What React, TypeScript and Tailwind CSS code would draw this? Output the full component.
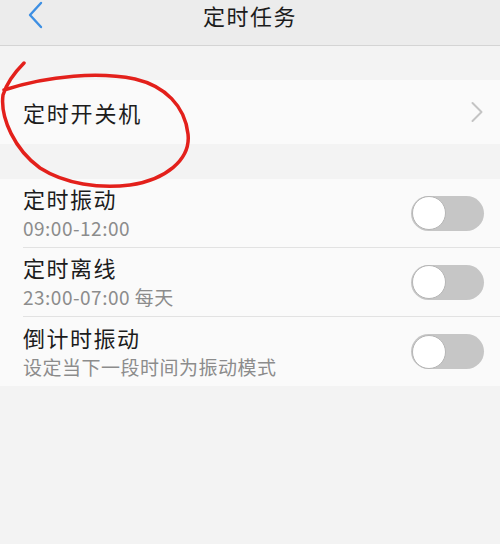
const font = { fontFamily: '"Noto Sans CJK SC", "Noto Sans", sans-serif' };

const toggles = [
  { id: 1, title: "定时振动", sub: "09:00-12:00" },
  { id: 2, title: "定时离线", sub: "23:00-07:00 每天" },
  { id: 3, title: "倒计时振动", sub: "设定当下一段时间为振动模式" },
];

const Switch = () => (
  <div className="w-[73px] h-[35px] rounded-full bg-[#c6c6c6] p-[1px] flex items-center shrink-0">
    <div className="w-[34px] h-[34px] rounded-full bg-white border border-[#b5b5b5]" />
  </div>
);

export default function App() {
  return (
    <div className="relative w-[500px] h-[544px] bg-[#f3f3f3] overflow-hidden" style={font}>
      <div className="h-[46px] bg-[#ececec] border-b border-[#d4d4d4] relative flex justify-center">
        <svg className="absolute left-[26px] top-[1px]" width="20" height="28" viewBox="0 0 20 28">
          <path d="M15 2 L4 14 L15 26" fill="none" stroke="#3d8fe3" strokeWidth="2.4" strokeLinecap="round" strokeLinejoin="round" />
        </svg>
        <h1 className="text-[22px] leading-[30px] tracking-[1.5px] text-[#1c1c1c]">定时任务</h1>
      </div>

      <div className="mt-[34px] h-[64px] bg-[#fafafa] flex items-center justify-between pl-[23px] pr-[16px]">
        <span className="text-[22px] tracking-[1.8px] text-[#1c1c1c]">定时开关机</span>
        <svg width="14" height="22" viewBox="0 0 14 22">
          <path d="M2.5 2 L11.5 11 L2.5 20" fill="none" stroke="#c4c4c4" strokeWidth="2" strokeLinecap="round" strokeLinejoin="round" />
        </svg>
      </div>

      <div className="mt-[35px] bg-[#fafafa]">
        {toggles.map((t, i) => (
          <div key={t.id} className="pl-[23px]">
            <div
              className={
                "h-[69px] flex items-center justify-between pr-[16px] " +
                (i < toggles.length - 1 ? "border-b border-[#e2e2e2]" : "")
              }
            >
              <div className="flex flex-col">
                <span className="text-[22px] leading-[28px] tracking-[1.5px] text-[#1c1c1c]">{t.title}</span>
                <span className="mt-[2px] text-[19px] leading-[28px] tracking-[0.5px] text-[#8c8c8c]">{t.sub}</span>
              </div>
              <Switch />
            </div>
          </div>
        ))}
      </div>

      <svg className="absolute left-0 top-0 pointer-events-none" width="500" height="544" viewBox="0 0 500 544">
        <path
          d="M24 63 C15 72 7 82 3 95 C0 118 15 150 40 168 C65 184 100 189 130 185 C165 180 191 160 188 134 C185 106 165 86 135 79 C100 72 50 75 4 90"
          fill="none"
          stroke="#e3201b"
          strokeWidth="3.5"
          strokeLinecap="round"
        />
      </svg>
    </div>
  );
}
